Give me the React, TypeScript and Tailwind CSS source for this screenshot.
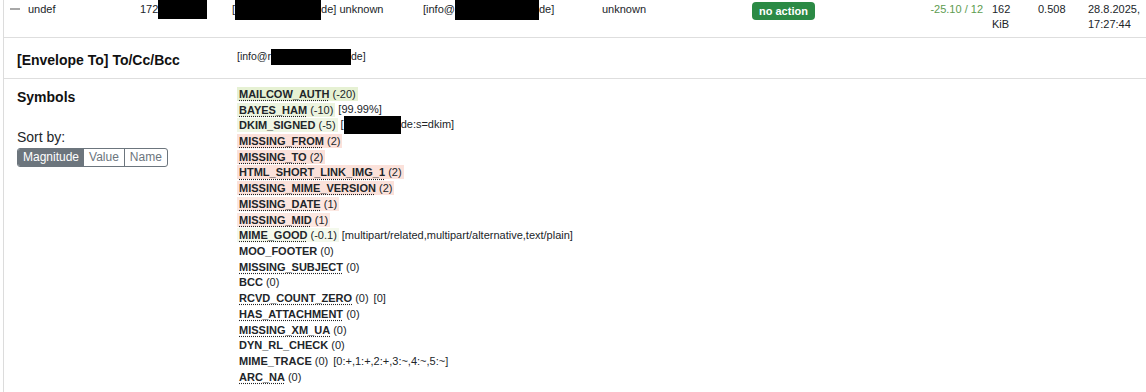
import React from 'react'

type Sym = {
    name: string
    score: string
    tint?: string
    dotted?: boolean
    extra?: React.ReactNode
}

const Redact = ({ w, h = 'h-[16px]' }: { w: string; h?: string }) => (
    <span className={`inline-block bg-black align-middle ${w} ${h}`} />
)

const symbols: Sym[] = [
    { name: 'MAILCOW_AUTH', score: '(-20)', tint: 'bg-[#e6f1d3]', dotted: true },
    { name: 'BAYES_HAM', score: '(-10)', tint: 'bg-[#ecf4df]', dotted: true, extra: '[99.99%]' },
    {
        name: 'DKIM_SIGNED',
        score: '(-5)',
        tint: 'bg-[#eff6e4]',
        extra: (
            <>
                [<Redact w="w-[57px]" h="h-[18px]" />
                de:s=dkim]
            </>
        ),
    },
    { name: 'MISSING_FROM', score: '(2)', tint: 'bg-[#fbe1da]', dotted: true },
    { name: 'MISSING_TO', score: '(2)', tint: 'bg-[#fbe1da]', dotted: true },
    { name: 'HTML_SHORT_LINK_IMG_1', score: '(2)', tint: 'bg-[#fbe1da]', dotted: true },
    { name: 'MISSING_MIME_VERSION', score: '(2)', tint: 'bg-[#fbe1da]', dotted: true },
    { name: 'MISSING_DATE', score: '(1)', tint: 'bg-[#fce7e1]', dotted: true },
    { name: 'MISSING_MID', score: '(1)', tint: 'bg-[#fce7e1]', dotted: true },
    {
        name: 'MIME_GOOD',
        score: '(-0.1)',
        tint: 'bg-[#f4f9ec]',
        dotted: true,
        extra: '[multipart/related,multipart/alternative,text/plain]',
    },
    { name: 'MOO_FOOTER', score: '(0)' },
    { name: 'MISSING_SUBJECT', score: '(0)', dotted: true },
    { name: 'BCC', score: '(0)' },
    { name: 'RCVD_COUNT_ZERO', score: '(0)', dotted: true, extra: '[0]' },
    { name: 'HAS_ATTACHMENT', score: '(0)', dotted: true },
    { name: 'MISSING_XM_UA', score: '(0)', dotted: true },
    { name: 'DYN_RL_CHECK', score: '(0)' },
    { name: 'MIME_TRACE', score: '(0)', extra: '[0:+,1:+,2:+,3:~,4:~,5:~]' },
    { name: 'ARC_NA', score: '(0)', dotted: true },
]

export default function App() {
    return (
        <div className="min-h-[392px] w-[1146px] overflow-hidden bg-white font-['Liberation_Sans',Arial,sans-serif] text-[11px] text-[#212529]">
            <div className="ml-[3px] min-h-[392px] border-l border-[#dcdcdc]">
                {/* Message row */}
                <div className="flex h-[38px] border-b border-[#dedede] pt-[2px] leading-[15px] whitespace-nowrap">
                    <div className="w-[24px]">
                        <span className="ml-[6px] mt-[6px] block h-[2px] w-[10px] bg-[#a8a8a8]" />
                    </div>
                    <div className="w-[112px]">undef</div>
                    <div className="w-[92px]">
                        172
                        <span className="-mt-[2px] inline-block h-[19px] w-[49px] bg-black align-top" />
                    </div>
                    <div className="w-[191px]">
                        [
                        <span className="-mt-[2px] inline-block h-[20px] w-[86px] bg-black align-top" />
                        de] unknown
                    </div>
                    <div className="w-[179px]">
                        [info@
                        <span className="-mt-[2px] inline-block h-[20px] w-[84px] bg-black align-top" />
                        de]
                    </div>
                    <div className="w-[150px]">unknown</div>
                    <div className="w-[148px]">
                        <span className="inline-block h-[18px] rounded-[4px] bg-[#2b8a45] px-[7px] font-bold leading-[18px] text-white">
                            no action
                        </span>
                    </div>
                    <div className="w-[88px] pr-[5px] text-right text-[#5d9c50]">-25.10 / 12</div>
                    <div className="w-[50px] pl-[4px]">
                        162
                        <br />
                        KiB
                    </div>
                    <div className="w-[50px]">0.508</div>
                    <div>
                        28.8.2025,
                        <br />
                        17:27:44
                    </div>
                </div>

                {/* Envelope To */}
                <div className="flex h-[41px] border-b border-[#dedede]">
                    <div className="w-[233px] pl-[13px] pt-[12px] text-[14px] font-bold leading-[20px] text-[#111]">
                        [Envelope To] To/Cc/Bcc
                    </div>
                    <div className="pt-[11px] text-[10.5px] leading-[15px] whitespace-nowrap">
                        [info@r
                        <Redact w="w-[80px]" h="h-[16px]" />
                        de]
                    </div>
                </div>

                {/* Symbols */}
                <div className="flex pt-[7px]">
                    <div className="w-[233px] pl-[13px]">
                        <div className="pt-[1px] text-[14px] font-bold leading-[20px] text-[#111]">Symbols</div>
                        <div className="mt-[20px] text-[14px] leading-[20px] text-[#212529]">Sort by:</div>
                        <div className="mt-[1px] flex h-[19px] w-fit overflow-hidden rounded-[3px] border border-[#6c757d] text-[12px] leading-[17px]">
                            <span className="bg-[#6c757d] px-[5px] text-white">Magnitude</span>
                            <span className="border-r border-[#6c757d] px-[5px] text-[#6c757d]">Value</span>
                            <span className="px-[5px] text-[#6c757d]">Name</span>
                        </div>
                    </div>
                    <div>
                        {symbols.map((s) => (
                            <div key={s.name} className="flex h-[15.72px] items-center whitespace-nowrap">
                                <span className={`px-[2px] leading-[14px] ${s.tint ?? ''}`}>
                                    <span
                                        className={`font-bold ${
                                            s.dotted
                                                ? 'underline decoration-dotted decoration-[#222] underline-offset-[2px]'
                                                : ''
                                        }`}
                                    >
                                        {s.name}
                                    </span>{' '}
                                    {s.score}
                                </span>
                                {s.extra && <span className="ml-[3px]">{s.extra}</span>}
                            </div>
                        ))}
                    </div>
                </div>
            </div>
        </div>
    )
}
